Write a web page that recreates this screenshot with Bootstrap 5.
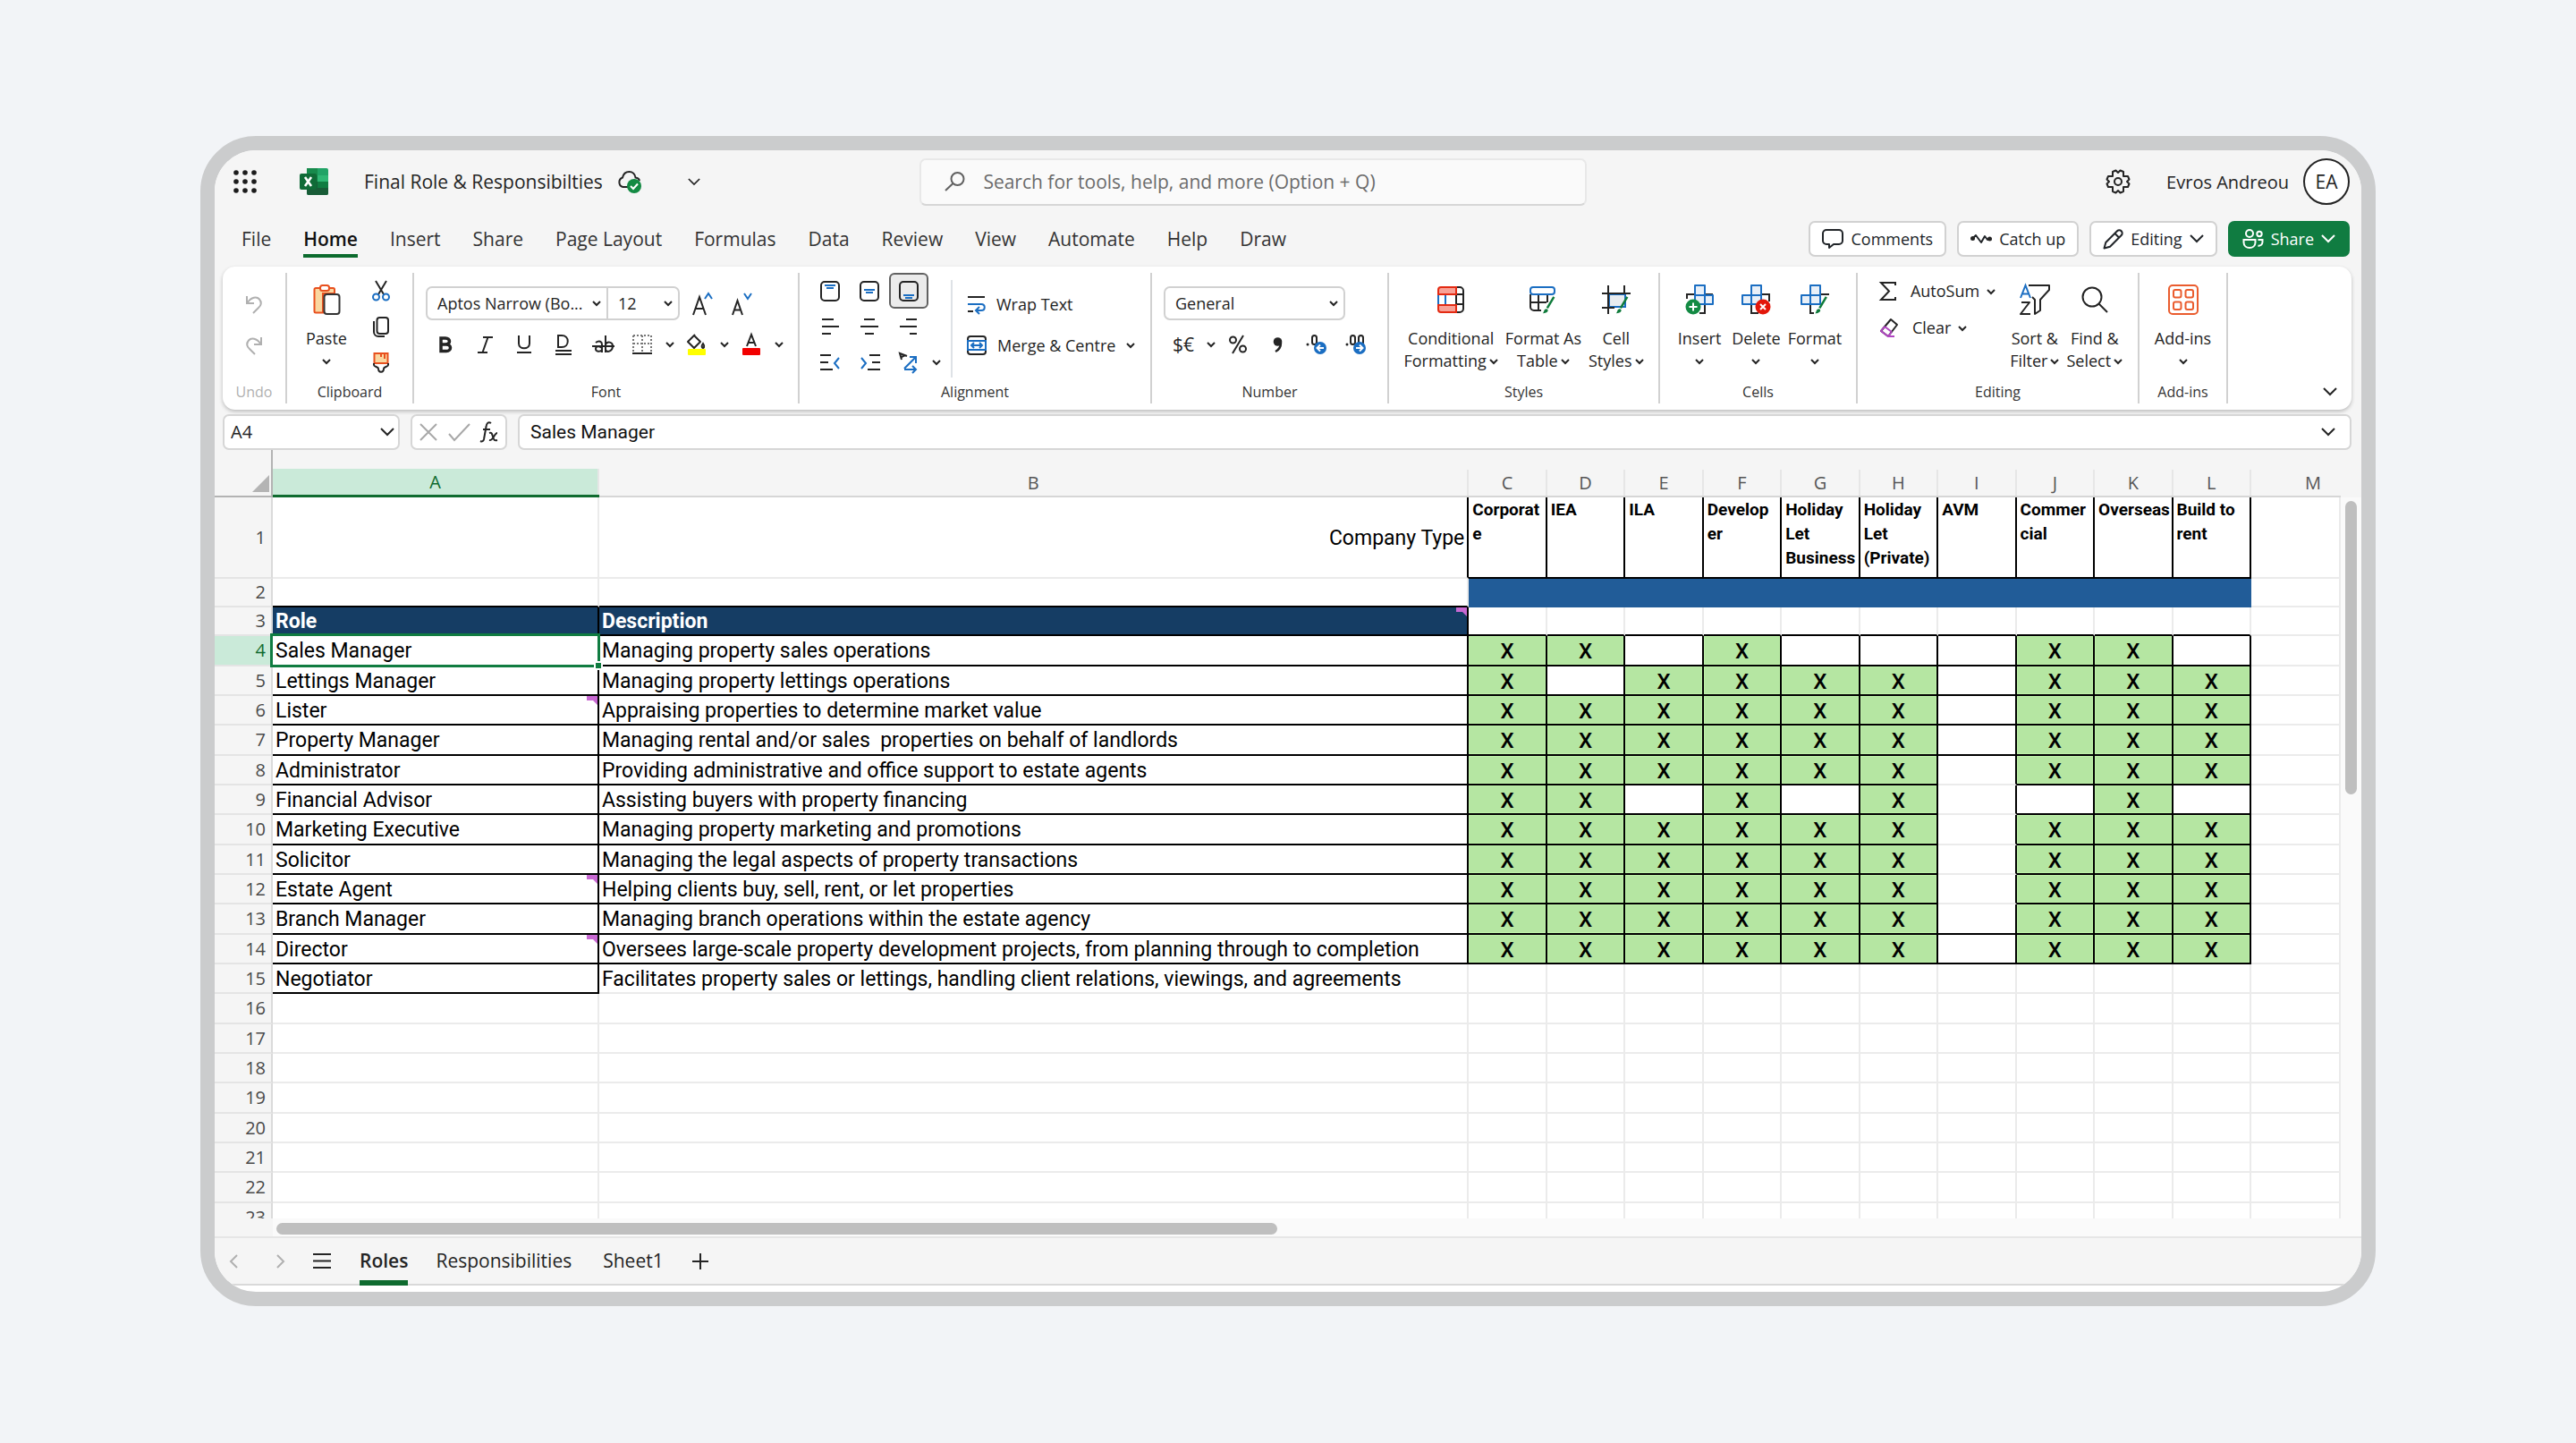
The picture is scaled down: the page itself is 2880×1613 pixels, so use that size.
<!DOCTYPE html>
<html lang="en">
<head>
<meta charset="utf-8">
<meta name="viewport" content="width=device-width, initial-scale=1">
<title>Final Role &amp; Responsibilties</title>
<link href="https://cdn.jsdelivr.net/npm/bootstrap@5.3.0/dist/css/bootstrap.min.css" rel="stylesheet">
<style>
:root{--ui:"Open Sans","Noto Sans",sans-serif;--cell:Roboto,"Liberation Sans",sans-serif;--line:#ebebeb;--ink:#242424;--blue:#1b6ec2;--green:#0f7b3b}
body{background:#f2f4f7;font-family:var(--ui);color:var(--ink);font-size:19px;line-height:25px}
svg{display:block;flex:none;fill:none;stroke:currentColor;stroke-width:2;overflow:visible}
button{font:inherit;color:inherit;border:0;background:none;padding:0}
.stage{height:100vh;padding:152px 224px 153px}
.device{border:16px solid #cbcccd;border-radius:62px;background:#fff;overflow:hidden}
.chrome-bg{background:#f5f5f5}
/* title row */
.titlebar{height:70px;padding:0 13px 0 21px;font-size:21px}
.title-left{flex:9 1 0}
.title-right{flex:10 1 0;font-size:20px}
.searchbox{width:746px;height:53px;border:2px solid #e8e8e8;border-bottom-color:#d6d6d6;border-radius:7px;background:#fafafa;padding:0 26px}
.searchbox input{background:none;border:0;outline:0;font-size:21px;color:#616161;width:100%}
.searchbox input::placeholder{color:#6b6b6b;opacity:1}
.avatar{width:52px;height:52px;border:2px solid #242424;background:#fff;font-size:21px}
/* menu row */
.menubar{height:60px;padding:0 13px 0 30px}
.menubar .nav-link{color:#333;font-size:21px;line-height:28px;padding:5px 0 3px;border-bottom:4px solid transparent}
.menubar .nav-link.active{color:#111;font-weight:600;border-color:#0c6b2e}
.menubar .nav{gap:36px}
.cmds{gap:12px;padding-bottom:2px}
.cmd{height:40px;border:2px solid #d1d1d1;border-radius:7px;background:#fff;font-size:18px;padding:0 13px;gap:8px}
.cmd:hover{background:#fff}
.cmd.share{background:#107c41;border-color:#107c41;color:#fff;padding:0 14px}
/* ribbon */
.ribbon{height:160px;margin:0 11px 0 9px;padding:7px 0;background:#fff;border-radius:14px;box-shadow:0 2px 4px rgba(0,0,0,.24);font-size:18px}
.grp{border-right:2px solid #d1d1d1;min-width:0;flex-basis:0}
.grp-body{height:121px}
.grp-name{font-size:16px;line-height:24px;text-align:center;color:#333}
.wide-row{height:38px}
.ico{width:44px;height:38px;display:flex;align-items:center;justify-content:center}
.ico.short{height:40px}
.drop{width:17px;height:38px;display:flex;align-items:center;justify-content:center}
.rowbtn{height:41px;display:flex;align-items:center;gap:8px}
.rowbtn svg:first-child{margin-right:8px}
.rowbtn svg:only-child{margin-right:0}
.clip{gap:28px}
.big{padding-top:12px;display:flex;flex-direction:column;align-items:center;text-align:center;line-height:25px;white-space:nowrap}
.big .pic{height:36px;display:flex;align-items:center;margin-bottom:13px}
.big .ln{display:flex;align-items:center;justify-content:center;gap:3px;height:25px}
.chosen{background:#ebebeb;border:2px solid #616161;border-radius:6px}
.fontbody{padding:15px 0 0 13px}
.labelled{gap:12px}
.slot{height:38px;border:2px solid #d1d1d1;border-radius:7px;background-color:#fff;font-size:18px;line-height:24px;padding:0 20px 0 11px;color:var(--ink);background-size:10px 8px;background-position:right 6px center;
--bs-form-select-bg-img:url("data:image/svg+xml,%3Csvg xmlns='http://www.w3.org/2000/svg' viewBox='0 0 10 8'%3E%3Cpath d='M1 2l4 4 4-4' fill='none' stroke='%23242424' stroke-width='2'/%3E%3C/svg%3E")}
.slot.l{border-radius:7px 0 0 7px}.slot.r{border-radius:0 7px 7px 0;margin-left:-2px}
/* formula bar */
.fbar{padding:5px 11px 0 9px;gap:12px}
.fbox{height:40px;border:2px solid #d6d6d6;border-radius:7px;background-color:#fff}
.namebox{width:198px;font-size:20px;line-height:26px;padding:0 30px 0 7px;color:var(--ink);background-size:16px 10px;background-position:right 4px center;
--bs-form-select-bg-img:url("data:image/svg+xml,%3Csvg xmlns='http://www.w3.org/2000/svg' viewBox='0 0 16 10'%3E%3Cpath d='M1 1l7 7 7-7' fill='none' stroke='%23242424' stroke-width='2'/%3E%3C/svg%3E")}
.fbox input{border:0;outline:0;background:none;font-family:var(--cell);font-size:21px;color:#111}
/* sheet */
.sheet{overflow:hidden;min-height:0}
.cells{width:100%;table-layout:fixed;border-collapse:separate;border-spacing:0;font-family:var(--cell);font-size:23px;line-height:28px;color:#000;background:#fff}
.cells th,.cells td{padding:0;overflow:hidden;white-space:nowrap}
.cells thead th{height:53px;background:#f5f5f5;border-bottom:2px solid #d6d6d6;vertical-align:bottom;font:20px/29px var(--ui);color:#555;text-align:center}
.cells thead th span{display:block;height:29px;border-right:2px solid #e6e6e6}
.cells thead th.corner{border-bottom-color:#b3b3b3;border-right:2px solid #b3b3b3;position:relative}
.cells thead th.sel{border-bottom:3px solid #0f6b2f}
.cells thead th.sel span{background:#caead9;color:#0f6b2f}
.cells thead th.end span{border-color:transparent}
.cells thead th.end{text-align:right}.cells thead th.end span{padding-right:20px}
.corner svg{margin:0 0 4px auto;padding-right:2px}
.cells tbody tr{height:33px}
.cells tbody tr:nth-child(3n+1){height:34px}
.cells tbody tr.r1{height:91px}
.cells tbody tr.r2,.cells tbody tr.r3{height:32px}
.cells tbody th{background:#f5f5f5;border-right:2px solid #dadada;border-bottom:2px solid #e4e4e4;font:20px/26px var(--ui);color:#4a4a4a;text-align:right;padding-right:6px}
.cells tbody th.sel{background:#caead9;color:#0f6b2f}
.cells td{border-right:2px solid var(--line);border-bottom:2px solid var(--line);vertical-align:middle;padding:2px 3px 0}
.cells td.kr{border-right-color:#000}.cells td.kb{border-bottom-color:#000}
.cells td.on{background:#b5e6a2;text-align:center;font-size:24px;font-weight:500;padding:2px 0 0;box-shadow:inset 0 0 0 1px #bff3aa}
.cells td.type{font-size:19px;line-height:27px;font-weight:700;vertical-align:top;padding:0 0 0 4px}
.cells td.band{background:#215c98;border-color:#215c98}
.cells td.navy{background:#153d64;color:#fff;font-weight:700;border-bottom-color:#000;border-right-color:#000}
.cells td.note{position:relative}
.note svg{position:absolute;right:0;top:0}
.cells td.cur{position:relative;overflow:visible}
.cur i{position:absolute;inset:-3px;border:3px solid #107c41;z-index:2}
.cur i::after{content:"";position:absolute;right:-6px;bottom:-6px;width:10px;height:10px;background:#107c41;border:2px solid #fff}
.vbar{width:23px;background:#fafafa;margin-top:53px;padding:4px 5px 0;flex:none}
.vthumb{height:328px;border-radius:7px;background:#bfbfbf;width:13px}
.hrow{height:22px;border-bottom:2px solid #e6e6e6}
.htrack{margin-left:65px;background:#fafafa;padding:5px 0 0 4px}
.hthumb{width:48%;height:13px;border-radius:7px;background:#bfbfbf}
.sheets{height:53px;border-bottom:2px solid #d9d9d9;padding-left:17px;margin-bottom:7px;font-size:21px}
.sheets .nav{gap:31px}
.steps{gap:43px}
.sheets .nav-link{color:#242424;padding:0;line-height:51px;border-bottom:6px solid transparent;height:53px}
.sheets .nav-link.active{font-weight:600;border-color:#0f6b2f}
</style>
</head>
<body>
<svg width="0" height="0" class="position-absolute" aria-hidden="true">
  <symbol id="chev" viewBox="0 0 10 8"><path d="M1 2l4 4 4-4"/></symbol>
  <symbol id="chevL" viewBox="0 0 16 10"><path d="M1 1l7 7 7-7"/></symbol>
  <symbol id="brush" viewBox="0 0 18 24"><path d="M16 1L7 16" stroke="#0f7b3b" stroke-width="3"/><path d="M1 23c2-1 1-6 5-6 4 1 2 6-5 6z" fill="#0f7b3b" stroke="none"/></symbol>
</svg>
<div class="stage">
<main class="device h-100 d-flex flex-column">
  <header class="chrome-bg">
    <div class="titlebar d-flex align-items-center">
      <div class="title-left d-flex align-items-center">
        <button aria-label="Apps"><svg width="26" height="26" viewBox="0 0 26 26" stroke="none" fill="#1b1b1b"><g fill="#1b1b1b" stroke="none"><circle cx="3" cy="3" r="2.800"/><circle cx="13" cy="3" r="2.800"/><circle cx="23" cy="3" r="2.800"/><circle cx="3" cy="13" r="2.800"/><circle cx="13" cy="13" r="2.800"/><circle cx="23" cy="13" r="2.800"/><circle cx="3" cy="23" r="2.800"/><circle cx="13" cy="23" r="2.800"/><circle cx="23" cy="23" r="2.800"/></g></svg></button>
        <svg class="ms-5" width="32" height="30" viewBox="0 0 32 30"><g stroke="none"><rect x="8" width="24" height="30" rx="2" fill="#21a366"/><path d="M8 0h12v8H8z" fill="#178a4c"/><path d="M20 8h12v7H20z" fill="#2fb774"/><path d="M8 8h12v7H8zM20 15h12v7H20z" fill="#107c41"/><path d="M8 15h12v7H8zM8 22h24v6a2 2 0 0 1-2 2H10a2 2 0 0 1-2-2z" fill="#185c37"/><rect y="6" width="19" height="18" rx="2" fill="#0f6b37"/></g><path d="M6 10l7 10M13 10L6 20" stroke="#fff" stroke-width="2.600"/></svg>
        <span class="text-nowrap ms-4 ps-3">Final Role &amp; Responsibilties</span>
        <svg class="ms-3" width="27" height="25" viewBox="0 0 27 25"><path d="M12 18H6.500a5.500 5.500 0 0 1-.5-10.500C7 3 10 1 13.500 1S20 3.500 20.500 7.500c2.500.2 4 1.500 4.500 3.500"/><circle cx="19" cy="17" r="8" fill="#138a43" stroke="none"/><path d="M15 17l3 3 5-5.500" stroke="#fff"/></svg>
        <button class="ms-5 ps-1" aria-label="File options"><svg width="14" height="9"><use href="#chevL"/></svg></button>
      </div>
      <label class="searchbox d-flex align-items-center gap-3"><svg width="23" height="22" viewBox="0 0 23 22"><circle cx="14.500" cy="8" r="7" stroke="#616161"/><path d="M9.500 13L1 21" stroke="#616161"/></svg><input type="search" class="ps-1" aria-label="Search" placeholder="Search for tools, help, and more (Option + Q)"></label>
      <div class="title-right d-flex align-items-center justify-content-end">
        <button aria-label="Settings" class="me-4 pe-3"><svg width="28" height="28" viewBox="0 0 28 28"><path d="M11.500 1.500 14 4 16.500 1.500 20 3l0 3.500L20 8l1.500 0L25 8l1.500 3.500L24 14l2.500 2.500L25 20h-5v5l-3.500 1.500L14 24l-2.500 2.500L8 25v-5H3l-1.500-3.500L4 14l-2.500-2.500L3 8h5V3z" stroke-linejoin="round"/><circle cx="14" cy="14" r="4"/></svg></button>
        <span class="text-nowrap me-3">Evros Andreou</span>
        <span class="avatar rounded-circle d-flex align-items-center justify-content-center">EA</span>
      </div>
    </div>
    <div class="menubar d-flex align-items-center justify-content-between">
      <nav class="nav flex-nowrap text-nowrap">
        <a class="nav-link" href="#">File</a><a class="nav-link active" href="#">Home</a><a class="nav-link" href="#">Insert</a><a class="nav-link" href="#">Share</a><a class="nav-link" href="#">Page Layout</a><a class="nav-link" href="#">Formulas</a><a class="nav-link" href="#">Data</a><a class="nav-link" href="#">Review</a><a class="nav-link" href="#">View</a><a class="nav-link" href="#">Automate</a><a class="nav-link" href="#">Help</a><a class="nav-link" href="#">Draw</a>
      </nav>
      <div class="cmds d-flex text-nowrap">
        <button class="btn cmd d-flex align-items-center"><svg width="24" height="22" viewBox="0 0 24 22"><path d="M5 1h14a4 4 0 0 1 4 4v8a4 4 0 0 1-4 4h-6l-5 4v-4H5a4 4 0 0 1-4-4V5a4 4 0 0 1 4-4z" stroke-linejoin="round"/></svg>Comments</button>
        <button class="btn cmd d-flex align-items-center"><svg width="24" height="14" viewBox="0 0 24 14"><path d="M2 7l4-4 6 8 4-7 3 4 3-1" stroke-linejoin="round"/><circle cx="2.500" cy="6.500" r="2.500" fill="#242424" stroke="none"/><circle cx="21.500" cy="7" r="2.500" fill="#242424" stroke="none"/></svg>Catch up</button>
        <button class="btn cmd d-flex align-items-center"><svg width="23" height="23" viewBox="0 0 23 23"><path d="M1.500 21.500l1.800-6.500L16 2.300a3.300 3.300 0 0 1 4.700 4.700L8 19.700zM13.500 5l4.500 4.500" stroke-linejoin="round"/></svg>Editing<svg width="16" height="10"><use href="#chevL"/></svg></button>
        <button class="btn cmd share d-flex align-items-center"><svg width="24" height="22" viewBox="0 0 24 22"><circle cx="8" cy="5" r="4"/><circle cx="19" cy="5.500" r="2.700"/><path d="M1.500 12h13v3c0 8-13 8-13 0zM17.500 12h5v2.500c0 3.500-3 4.500-5 4"/></svg>Share<svg width="16" height="10"><use href="#chevL"/></svg></button>
      </div>
    </div>
    <div class="ribbon d-flex">
      <section class="grp" style="flex-grow:70">
        <div class="grp-body d-flex flex-column align-items-center pt-3" style="color:#b0b0b0">
          <button class="wide-row" aria-label="Undo"><svg width="18" height="21" viewBox="0 0 18 21"><path d="M1 1v8h8M1.500 8.500C6 2 12 1 15 4.500s2 7-1 9.500l-6 6"/></svg></button>
          <button class="wide-row mt-2" aria-label="Redo"><svg width="18" height="21" viewBox="0 0 18 21"><path d="M17 1v8H9M16.500 8.500C12 2 6 1 3 4.500s-2 7 1 9.500l6 6"/></svg></button>
        </div>
        <div class="grp-name" style="color:#b0b0b0">Undo</div>
      </section>
      <section class="grp" style="flex-grow:140">
        <div class="grp-body clip d-flex justify-content-center pe-1">
          <button class="big"><span class="pic"><svg width="31" height="34" viewBox="0 0 31 34"><path d="M7 4H3a1.500 1.500 0 0 0-1.500 1.500V30A1.500 1.500 0 0 0 3 31.500h8V10h13V5.500A1.500 1.500 0 0 0 22.500 4z" fill="#fad7a0" stroke="#e8501e"/><rect x="8" y="1" width="10" height="6" rx="2.500" fill="#fff" stroke="#e8501e"/><rect x="12.500" y="11" width="17" height="22" rx="3" fill="#fff" stroke="#333"/></svg></span><span class="ln">Paste</span><span class="ln"><svg width="10" height="8"><use href="#chev"/></svg></span></button>
          <div class="d-flex flex-column align-items-center">
            <button class="rowbtn" aria-label="Cut"><svg width="20" height="24" viewBox="0 0 20 24"><path d="M4 1l9 15M16 1L7 16"/><circle cx="4.500" cy="19" r="3.500" stroke="#1b6ec2"/><circle cx="15.500" cy="19" r="3.500" stroke="#1b6ec2"/></svg></button>
            <button class="rowbtn" aria-label="Copy"><svg width="18" height="23" viewBox="0 0 18 23"><rect x="4.500" y="1" width="12.500" height="18" rx="3"/><path d="M1 5v12a5 5 0 0 0 5 5h7"/></svg></button>
            <button class="rowbtn" aria-label="Format painter"><svg width="18" height="23" viewBox="0 0 18 23"><rect x="1.500" y="1" width="15" height="11" fill="#fad7a0" stroke="#e8501e"/><path d="M9 1v4M13 1v6" stroke="#e8501e"/><path d="M1 12v2c0 2 5 2 5 4 0 5 6 5 6 0 0-2 5-2 5-4v-2" stroke="#242424"/></svg></button>
          </div>
        </div>
        <div class="grp-name">Clipboard</div>
      </section>
      <section class="grp" style="flex-grow:429">
        <div class="grp-body fontbody">
          <div class="wide-row d-flex">
            <select class="form-select slot l" aria-label="Font" style="width:204px"><option>Aptos Narrow (Bo...</option></select>
            <select class="form-select slot r" aria-label="Font size" style="width:82px"><option>12</option></select>
            <button class="ico ms-1" aria-label="Grow font"><svg width="24" height="28" viewBox="0 0 24 28"><path d="M1 27L8 7l7 20M3.500 20h9"/><path d="M14 9l4-6 4 6" stroke="#1b6ec2"/></svg></button>
            <button class="ico" aria-label="Shrink font"><svg width="24" height="28" viewBox="0 0 24 28"><path d="M1 27L6.500 11 12 27M3 21.500h7"/><path d="M14 3l4 6 4-6" stroke="#1b6ec2"/></svg></button>
          </div>
          <div class="wide-row d-flex mt-2">
            <button class="ico" aria-label="Bold"><svg width="14" height="18" viewBox="0 0 14 18"><path d="M2 2h5c6 0 6 7 0 7H2zM2 9h6c6 0 6 7.500 0 7.500H2z" stroke-width="3.500"/></svg></button>
            <button class="ico" aria-label="Italic"><svg width="17" height="19" viewBox="0 0 17 19"><path d="M6 1h11M0 18h11M11.500 1l-6 17"/></svg></button>
            <button class="ico" aria-label="Underline"><svg width="16" height="20" viewBox="0 0 16 20"><path d="M2 0v9c0 7 12 7 12 0V0M0 19h16"/></svg></button>
            <button class="ico" aria-label="Double underline"><svg width="20" height="24" viewBox="0 0 20 24"><path d="M4 2h4c9 0 9 13 0 13H4zM1 19h18M1 23h18"/></svg></button>
            <button class="ico" aria-label="Strikethrough"><svg width="25" height="20" viewBox="0 0 25 20"><path d="M0 12h25M4 8c4-3 7-1 7 2v9M11 14c-3-3-7-2-7 1s5 4 7 1M15 0v19M15 10c2-4 8-3 8 2s-6 8-8 4"/></svg></button>
            <button class="ico" aria-label="Borders"><svg width="22" height="22" viewBox="0 0 22 22"><path d="M1 1h20v18M1 1v18M11 1v18M1 10h20" stroke="#777" stroke-dasharray="2 2"/><path d="M0 21h22"/></svg></button>
            <button class="drop" aria-label="More borders"><svg width="10" height="8"><use href="#chev"/></svg></button>
            <button class="ico" aria-label="Fill colour"><svg width="22" height="24" viewBox="0 0 22 24"><rect x="1" y="17" width="20" height="7" rx="1" fill="#ff0" stroke="none"/><path d="M8 2l7 7-7 7-7-7 8-8" stroke-linejoin="round"/><path d="M18 11c3 4 0 5 0 5s-3-1 0-5z"/></svg></button>
            <button class="drop" aria-label="More fill colours"><svg width="10" height="8"><use href="#chev"/></svg></button>
            <button class="ico" aria-label="Font colour"><svg width="20" height="24" viewBox="0 0 20 24"><path d="M5 14l5-13 5 13M7 10h6"/><rect y="16" width="20" height="8" rx="1" fill="#f20000" stroke="none"/></svg></button>
            <button class="drop" aria-label="More font colours"><svg width="10" height="8"><use href="#chev"/></svg></button>
          </div>
        </div>
        <div class="grp-name">Font</div>
      </section>
      <section class="grp" style="flex-grow:392">
        <div class="grp-body d-flex ps-2">
          <div class="ms-1">
            <div class="d-flex">
              <button class="ico short" aria-label="Top align"><svg width="22" height="23" viewBox="0 0 22 23"><rect x="1" y="1" width="20" height="21" rx="4"/><path d="M5 5h12M7 8h8" stroke="#1b6ec2"/></svg></button>
              <button class="ico short" aria-label="Middle align"><svg width="22" height="23" viewBox="0 0 22 23"><rect x="1" y="1" width="20" height="21" rx="4"/><path d="M5 10h12M7 13h8" stroke="#1b6ec2"/></svg></button>
              <button class="ico short chosen" aria-label="Bottom align"><svg width="22" height="23" viewBox="0 0 22 23"><rect x="1" y="1" width="20" height="21" rx="4"/><path d="M5 16h12M7 19h8" stroke="#1b6ec2"/></svg></button>
            </div>
            <div class="d-flex">
              <button class="ico short" aria-label="Align left"><svg width="20" height="20" viewBox="0 0 20 20"><path d="M1 2h13M1 10h19M1 18h10"/></svg></button>
              <button class="ico short" aria-label="Align centre"><svg width="20" height="20" viewBox="0 0 20 20"><path d="M4 2h12M0 10h20M5 18h10"/></svg></button>
              <button class="ico short" aria-label="Align right"><svg width="20" height="20" viewBox="0 0 20 20"><path d="M7 2h12M0 10h19M11 18h8"/></svg></button>
            </div>
            <div class="d-flex align-items-center">
              <button class="ico short" aria-label="Decrease indent"><svg width="23" height="20" viewBox="0 0 23 20"><path d="M0 2h12M0 10h9M0 18h14"/><path d="M21 5l-5 6 5 6" stroke="#1b6ec2"/></svg></button>
              <button class="ico short" aria-label="Increase indent"><svg width="23" height="20" viewBox="0 0 23 20"><path d="M11 2h12M14 10h9M9 18h14"/><path d="M2 5l5 6-5 6" stroke="#1b6ec2"/></svg></button>
              <button class="ico short" aria-label="Orientation"><svg width="22" height="22" viewBox="0 0 22 22"><path d="M3 8L1 1l8 3M3 5l4-2"/><path d="M6 18L19 5M12 5h7v7M6 19h13M15 15l4 4-4 4" stroke="#1b6ec2"/></svg></button>
              <button class="drop" aria-label="More orientations"><svg width="10" height="8"><use href="#chev"/></svg></button>
            </div>
          </div>
          <div class="border-start border-2 ms-2 mt-2 mb-1 ps-3 text-nowrap">
            <button class="wide-row labelled d-flex align-items-center mt-2"><svg width="21" height="20" viewBox="0 0 21 20"><path d="M1 2h19M1 18h6"/><path d="M1 10h15c5 0 5 7 0 7h-5M14 13l-4 4 4 4" stroke="#1b6ec2"/></svg>Wrap Text</button>
            <button class="wide-row labelled d-flex align-items-center mt-2"><svg width="22" height="22" viewBox="0 0 22 22"><path d="M1 6V4a3 3 0 0 1 3-3h14a3 3 0 0 1 3 3v2M1 16v2a3 3 0 0 0 3 3h14a3 3 0 0 0 3-3v-2"/><path d="M1 6h20v10H1zM5 11h12M8 8l-3 3 3 3M14 8l3 3-3 3" stroke="#1b6ec2"/></svg>Merge &amp; Centre<svg width="10" height="8"><use href="#chev"/></svg></button>
          </div>
        </div>
        <div class="grp-name">Alignment</div>
      </section>
      <section class="grp" style="flex-grow:263">
        <div class="grp-body fontbody">
          <select class="form-select slot" aria-label="Number format" style="width:203px"><option>General</option></select>
          <div class="wide-row d-flex mt-2">
            <button class="ico" aria-label="Currency" style="font-size:21px">$€</button>
            <button class="drop" aria-label="More currencies"><svg width="10" height="8"><use href="#chev"/></svg></button>
            <button class="ico" aria-label="Percent"><svg width="20" height="20" viewBox="0 0 20 20"><circle cx="4.500" cy="5" r="3.500"/><circle cx="15.500" cy="15" r="3.500"/><path d="M16 0L4 20"/></svg></button>
            <button class="ico" aria-label="Comma style"><svg width="11" height="17" viewBox="0 0 11 17"><path d="M3 16c4-2 6-5 6-10" stroke-width="2.500"/><circle cx="5.500" cy="5" r="4.800" fill="#242424" stroke="none"/></svg></button>
            <button class="ico" aria-label="Increase decimal"><svg width="24" height="24" viewBox="0 0 24 24"><rect x="7" y="2" width="5" height="10" rx="2.500"/><circle cx="2" cy="12" r="1.500" fill="#242424" stroke="none"/><circle cx="16" cy="16" r="7" fill="#1b6ec2" stroke="none"/><path d="M20 16h-7M16 12.500L12.500 16l3.500 3.500" stroke="#fff"/></svg></button>
            <button class="ico" aria-label="Decrease decimal"><svg width="24" height="24" viewBox="0 0 24 24"><rect x="6" y="2" width="5" height="10" rx="2.500"/><rect x="15" y="2" width="5" height="10" rx="2.500"/><circle cx="2" cy="12" r="1.500" fill="#242424" stroke="none"/><circle cx="16" cy="16" r="7" fill="#1b6ec2" stroke="none"/><path d="M12 16h7M16 12.500l3.500 3.500-3.500 3.500" stroke="#fff"/></svg></button>
          </div>
        </div>
        <div class="grp-name">Number</div>
      </section>
      <section class="grp" style="flex-grow:301">
        <div class="grp-body d-flex justify-content-center gap-2">
          <button class="big"><span class="pic"><svg width="30" height="30" viewBox="0 0 30 30"><path d="M21 1h4a4 4 0 0 1 4 4v20a4 4 0 0 1-4 4h-4M21 9h8M21 20h8M21 1v28"/><path d="M1 9v12M9 9v12" stroke="#1b6ec2"/><path d="M21 1v8H1V4a3 3 0 0 1 3-3zM1 21h20v8H4a3 3 0 0 1-3-3z" fill="#f8a196" stroke="#e32a12"/></svg></span><span class="ln">Conditional</span><span class="ln">Formatting <svg width="10" height="8"><use href="#chev"/></svg></span></button>
          <button class="big"><span class="pic"><svg width="32" height="32" viewBox="0 0 32 32"><path d="M2 10v14a4 4 0 0 0 4 4h8M2 19h18M11 10v18M21 10v9"/><rect x="2" y="2" width="27" height="8" rx="3" fill="#fff" stroke="#1b6ec2"/><svg x="14" y="12" width="17" height="20"><use href="#brush"/></svg></svg></span><span class="ln">Format As</span><span class="ln">Table <svg width="10" height="8"><use href="#chev"/></svg></span></button>
          <button class="big"><span class="pic"><svg width="32" height="32" viewBox="0 0 32 32"><rect x="8" y="10" width="18" height="14" fill="#e8ecf0" stroke="#1b6ec2"/><path d="M0 9h32M0 25h14M7 0v32M25 0v9"/><svg x="14" y="12" width="17" height="20"><use href="#brush"/></svg></svg></span><span class="ln">Cell</span><span class="ln">Styles <svg width="10" height="8"><use href="#chev"/></svg></span></button>
        </div>
        <div class="grp-name">Styles</div>
      </section>
      <section class="grp" style="flex-grow:219">
        <div class="grp-body d-flex justify-content-center gap-2">
          <button class="big px-1"><span class="pic"><svg width="34" height="34" viewBox="0 0 34 34"><path d="M3 16v-5h9M22 11h10M17 32h6v-9M17 32h6"/><path d="M12 1h11v11h9v10H12zM12 12h11v10M12 1v21" fill="#e9f0f8" stroke="#1b6ec2" stroke-linejoin="round"/><circle cx="10" cy="25" r="8.500" fill="#138a43" stroke="none"/><path d="M5.500 25h9M10 20.500v9" stroke="#fff"/></svg></span><span class="ln">Insert</span><span class="ln"><svg width="10" height="8"><use href="#chev"/></svg></span></button>
          <button class="big"><span class="pic"><svg width="34" height="34" viewBox="0 0 34 34"><path d="M22 11h10v8M12 22v10h8"/><path d="M12 1h11v21H2V12h10zM12 12v10M12 12h11" fill="#e9f0f8" stroke="#1b6ec2" stroke-linejoin="round"/><circle cx="25" cy="25" r="8.500" fill="#e3170a" stroke="none"/><path d="M22 22l6 6M28 22l-6 6" stroke="#fff"/></svg></span><span class="ln">Delete</span><span class="ln"><svg width="10" height="8"><use href="#chev"/></svg></span></button>
          <button class="big"><span class="pic"><svg width="34" height="34" viewBox="0 0 34 34"><path d="M22 11h11M12 22v10h4"/><path d="M12 1h11v21H2V12h10zM12 12v10M12 12h11" fill="#e9f0f8" stroke="#1b6ec2" stroke-linejoin="round"/><svg x="15" y="13" width="18" height="20"><use href="#brush"/></svg></svg></span><span class="ln">Format</span><span class="ln"><svg width="10" height="8"><use href="#chev"/></svg></span></button>
        </div>
        <div class="grp-name">Cells</div>
      </section>
      <section class="grp" style="flex-grow:313">
        <div class="grp-body d-flex justify-content-center gap-2 text-nowrap ps-2">
          <div class="me-2">
            <button class="rowbtn"><svg width="18" height="21" viewBox="0 0 18 21"><path d="M17 4V1H1l9 9.500L1 20h16v-3"/></svg>AutoSum<svg width="10" height="8"><use href="#chev"/></svg></button>
            <button class="rowbtn"><svg width="20" height="21" viewBox="0 0 20 21"><path d="M12 1l7 6-10 13-8-6z" stroke-linejoin="round"/><path d="M5 9l8 6M8 20h8M5 9l-4 5 8 6 4-5" stroke="#b146c2" stroke-linejoin="round"/></svg>Clear<svg width="10" height="8"><use href="#chev"/></svg></button>
          </div>
          <button class="big"><span class="pic"><svg width="34" height="34" viewBox="0 0 34 34"><path d="M1 15L6.500 1 12 15M3 10.500h7" stroke="#1b6ec2"/><path d="M2 20h9L1 33h11M10 1h23v5L23 17v12l-6 4V17l-3-3" stroke-linejoin="round"/></svg></span><span class="ln">Sort &amp;</span><span class="ln">Filter <svg width="10" height="8"><use href="#chev"/></svg></span></button>
          <button class="big"><span class="pic"><svg width="30" height="30" viewBox="0 0 30 30"><circle cx="12" cy="12" r="10.500"/><path d="M19.500 19.500L29 29"/></svg></span><span class="ln">Find &amp;</span><span class="ln">Select <svg width="10" height="8"><use href="#chev"/></svg></span></button>
        </div>
        <div class="grp-name">Editing</div>
      </section>
      <section class="grp" style="flex-grow:97">
        <div class="grp-body d-flex justify-content-center">
          <button class="big"><span class="pic"><svg width="34" height="34" viewBox="0 0 34 34" style="color:#ea5c2e"><rect x="1" y="1" width="32" height="32" rx="4"/><rect x="6" y="6" width="8.500" height="8.500" rx="2"/><rect x="19.500" y="6" width="8.500" height="8.500" rx="2"/><rect x="6" y="19.500" width="8.500" height="8.500" rx="2"/><rect x="19.500" y="19.500" width="8.500" height="8.500" rx="2"/></svg></span><span class="ln">Add-ins</span><span class="ln"><svg width="10" height="8"><use href="#chev"/></svg></span></button>
        </div>
        <div class="grp-name">Add-ins</div>
      </section>
      <div class="d-flex align-items-end justify-content-end pb-2 pe-3" style="flex:122 1 0"><button aria-label="Collapse ribbon"><svg width="16" height="10"><use href="#chevL"/></svg></button></div>
    </div>
    <div class="fbar d-flex">
      <select class="form-select fbox namebox" aria-label="Name box"><option>A4</option></select>
      <div class="fbox d-flex align-items-center justify-content-between px-2" style="width:108px">
        <svg width="20" height="20" viewBox="0 0 20 20"><path d="M1 1l18 18M19 1L1 19" stroke="#a8a8a8"/></svg>
        <svg width="25" height="20" viewBox="0 0 25 20"><path d="M1 12l6 7L24 1" stroke="#a8a8a8"/></svg>
        <svg width="20" height="24" viewBox="0 0 20 24"><path d="M12 2c-3-2-5 0-5.500 4L4 20c-.5 2-2 3-4 2M3 9h8M10 13c3-1 3 1 4 4s1 5 5 4M19 13c-3 0-5 9-9 8"/></svg>
      </div>
      <div class="fbox d-flex align-items-center flex-grow-1 ps-2 pe-3"><input class="flex-grow-1 ps-1" aria-label="Formula bar" value="Sales Manager"><svg width="16" height="10"><use href="#chevL"/></svg></div>
    </div>
  </header>
  <div class="sheet chrome-bg d-flex flex-grow-1">
    <div class="flex-grow-1 overflow-hidden">
    <table class="cells">
      <colgroup><col style="width:65px"><col style="width:365px"><col><col span="10" style="width:3.680%"><col style="width:100px"></colgroup>
      <thead><tr id="heads"><th class="corner" aria-label="Select all"><svg width="21" height="19" viewBox="0 0 19 19"><path d="M19 0v19H0z" fill="#b4b4b4" stroke="none"/></svg></th></tr></thead>
      <tbody id="grid"></tbody>
    </table>
    </div>
    <div class="vbar"><div class="vthumb"></div></div>
  </div>
  <footer class="chrome-bg">
    <div class="hrow"><div class="htrack h-100"><div class="hthumb"></div></div></div>
  </footer>
  <div class="sheets chrome-bg d-flex">
    <div class="steps d-flex align-items-center">
      <button aria-label="Previous sheet"><svg width="9" height="16" viewBox="0 0 9 16"><path d="M8 1L1 8l7 7" stroke="#b0b0b0"/></svg></button>
      <button aria-label="Next sheet"><svg width="9" height="16" viewBox="0 0 9 16"><path d="M1 1l7 7-7 7" stroke="#b0b0b0"/></svg></button>
    </div>
    <button class="mx-4 px-2" aria-label="All sheets"><svg width="20" height="17" viewBox="0 0 20 17"><path d="M0 1h20M0 8.500h20M0 16h20"/></svg></button>
    <nav class="nav flex-nowrap"><a class="nav-link active" href="#">Roles</a><a class="nav-link" href="#">Responsibilities</a><a class="nav-link ms-1" href="#">Sheet1</a></nav>
    <button class="ms-4 ps-2" aria-label="New sheet"><svg width="18" height="18" viewBox="0 0 18 18"><path d="M0 9h18M9 0v18"/></svg></button>
  </div>
</main>
</div>
<script>
const heads = document.getElementById('heads'), grid = document.getElementById('grid');
[...'ABCDEFGHIJKLM'].forEach(c => {
  const cls = c === 'A' ? 'sel' : c === 'M' ? 'end' : '';
  heads.insertAdjacentHTML('beforeend', `<th scope="col" class="${cls}"><span>${c}</span></th>`);
});
const types = ['Corporat<br>e','IEA','ILA','Develop<br>er','Holiday<br>Let<br>Business','Holiday<br>Let<br>(Private)','AVM','Commer<br>cial','Overseas','Build to<br>rent'];
const all = 'XXXXXX-XXX';
const roles = [
  ['Sales Manager','Managing property sales operations','XX-X---XX-'],
  ['Lettings Manager','Managing property lettings operations','X-XXXX-XXX'],
  ['Lister','Appraising properties to determine market value',all],
  ['Property Manager','Managing rental and/or sales&nbsp; properties on behalf of landlords',all],
  ['Administrator','Providing administrative and office support to estate agents',all],
  ['Financial Advisor','Assisting buyers with property financing','XX-X-X--X-'],
  ['Marketing Executive','Managing property marketing and promotions',all],
  ['Solicitor','Managing the legal aspects of property transactions',all],
  ['Estate Agent','Helping clients buy, sell, rent, or let properties',all],
  ['Branch Manager','Managing branch operations within the estate agency',all],
  ['Director','Oversees large-scale property development projects, from planning through to completion',all],
  ['Negotiator','Facilitates property sales or lettings, handling client relations, viewings, and agreements','']
];
const flag = '<svg width="12" height="10" viewBox="0 0 12 10"><path d="M0 0h12v10L7 5H0z" fill="#c869d2" stroke="none"/></svg>';
let h = `<tr class="r1"><th scope="row">1</th><td></td><td class="kr text-end">Company Type</td>${types.map(t => `<td class="kr kb type">${t}</td>`).join('')}<td></td></tr>`;
h += `<tr class="r2"><th scope="row">2</th><td class="kb"></td><td class="kb"></td>${'<td class="band"></td>'.repeat(10)}<td></td></tr>`;
h += `<tr class="r3"><th scope="row">3</th><td class="navy">Role</td><td class="navy note">Description${flag}</td>${'<td class="kb"></td>'.repeat(10)}<td></td></tr>`;
roles.forEach(([r, d, x], i) => {
  const n = i + 4, last = n === 15;
  const note = [6, 12, 14].includes(n);
  h += `<tr><th scope="row"${n === 4 ? ' class="sel"' : ''}>${n}</th><td class="kr kb${n === 4 ? ' cur' : ''}${note ? ' note' : ''}">${r}${note ? flag : ''}${n === 4 ? '<i></i>' : ''}</td><td class="${last ? '' : 'kr kb'}">${d}</td>`;
  for (let c = 0; c < 10; c++) {
    if (last) { h += '<td></td>'; continue; }
    const open = c === 6 && n >= 8 && n <= 12;
    h += `<td class="kr${open ? '' : ' kb'}${x[c] === 'X' ? ' on">X' : '">'}</td>`;
  }
  h += '<td></td></tr>';
});
for (let n = 16; n <= 23; n++) h += `<tr><th scope="row">${n}</th>${'<td></td>'.repeat(13)}</tr>`;
grid.innerHTML = h;
</script>
<script src="https://cdn.jsdelivr.net/npm/bootstrap@5.3.0/dist/js/bootstrap.bundle.min.js"></script>
</body>
</html>
